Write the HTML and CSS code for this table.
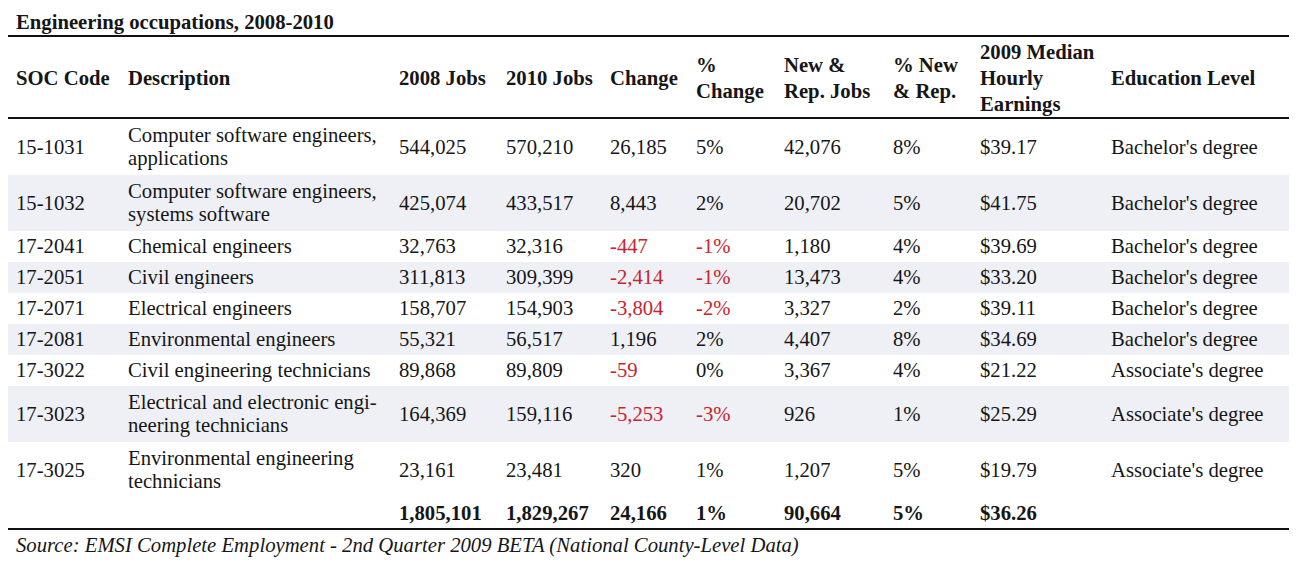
FILE: index.html
```html
<!DOCTYPE html>
<html>
<head>
<meta charset="utf-8">
<title>Engineering occupations, 2008-2010</title>
<link rel="stylesheet" href="styles.css">
</head>
<body>
<div class="wrap">
  <div class="title">Engineering occupations, 2008-2010</div>
  <table class="data">
    <colgroup>
      <col class="c1"><col class="c2"><col class="c3"><col class="c4"><col class="c5">
      <col class="c6"><col class="c7"><col class="c8"><col class="c9"><col class="c10">
    </colgroup>
    <thead>
      <tr>
        <th>SOC Code</th>
        <th>Description</th>
        <th>2008 Jobs</th>
        <th>2010 Jobs</th>
        <th>Change</th>
        <th>%<br>Change</th>
        <th>New &amp;<br>Rep. Jobs</th>
        <th>% New<br>&amp; Rep.</th>
        <th>2009 Median<br>Hourly<br>Earnings</th>
        <th>Education Level</th>
      </tr>
    </thead>
    <tbody>
      <tr class="two">
        <td>15-1031</td><td>Computer software engineers,<br>applications</td>
        <td>544,025</td><td>570,210</td><td>26,185</td><td>5%</td><td>42,076</td><td>8%</td><td>$39.17</td><td>Bachelor's degree</td>
      </tr>
      <tr class="two shade">
        <td>15-1032</td><td>Computer software engineers,<br>systems software</td>
        <td>425,074</td><td>433,517</td><td>8,443</td><td>2%</td><td>20,702</td><td>5%</td><td>$41.75</td><td>Bachelor's degree</td>
      </tr>
      <tr>
        <td>17-2041</td><td>Chemical engineers</td>
        <td>32,763</td><td>32,316</td><td class="neg">-447</td><td class="neg">-1%</td><td>1,180</td><td>4%</td><td>$39.69</td><td>Bachelor's degree</td>
      </tr>
      <tr class="shade">
        <td>17-2051</td><td>Civil engineers</td>
        <td>311,813</td><td>309,399</td><td class="neg">-2,414</td><td class="neg">-1%</td><td>13,473</td><td>4%</td><td>$33.20</td><td>Bachelor's degree</td>
      </tr>
      <tr>
        <td>17-2071</td><td>Electrical engineers</td>
        <td>158,707</td><td>154,903</td><td class="neg">-3,804</td><td class="neg">-2%</td><td>3,327</td><td>2%</td><td>$39.11</td><td>Bachelor's degree</td>
      </tr>
      <tr class="shade">
        <td>17-2081</td><td>Environmental engineers</td>
        <td>55,321</td><td>56,517</td><td>1,196</td><td>2%</td><td>4,407</td><td>8%</td><td>$34.69</td><td>Bachelor's degree</td>
      </tr>
      <tr>
        <td>17-3022</td><td>Civil engineering technicians</td>
        <td>89,868</td><td>89,809</td><td class="neg">-59</td><td>0%</td><td>3,367</td><td>4%</td><td>$21.22</td><td>Associate's degree</td>
      </tr>
      <tr class="two shade">
        <td>17-3023</td><td>Electrical and electronic engi-<br>neering technicians</td>
        <td>164,369</td><td>159,116</td><td class="neg">-5,253</td><td class="neg">-3%</td><td>926</td><td>1%</td><td>$25.29</td><td>Associate's degree</td>
      </tr>
      <tr class="two">
        <td>17-3025</td><td>Environmental engineering<br>technicians</td>
        <td>23,161</td><td>23,481</td><td>320</td><td>1%</td><td>1,207</td><td>5%</td><td>$19.79</td><td>Associate's degree</td>
      </tr>
    </tbody>
    <tfoot>
      <tr>
        <td></td><td></td>
        <td>1,805,101</td><td>1,829,267</td><td>24,166</td><td>1%</td><td>90,664</td><td>5%</td><td>$36.26</td><td></td>
      </tr>
    </tfoot>
  </table>
  <div class="source">Source: EMSI Complete Employment - 2nd Quarter 2009 BETA (National County-Level Data)</div>
</div>
</body>
</html>
```

FILE: styles.css
```css
html, body {
  margin: 0;
  padding: 0;
  background: #ffffff;
}

body {
  font-family: "Liberation Serif", "Times New Roman", serif;
  color: #161616;
  font-size: 20.7px;
}

.wrap {
  width: 1281px;
  padding: 10px 0 0 8px;
}

.title {
  font-weight: bold;
  line-height: 24px;
  height: 25px;
  padding-left: 8px;
}

.data {
  width: 1281px;
  table-layout: fixed;
  border-collapse: collapse;
  border-top: 2px solid #111;
  border-bottom: 2px solid #111;
}

.c1 { width: 112px; }
.c2 { width: 271px; }
.c3 { width: 107px; }
.c4 { width: 104px; }
.c5 { width: 86px; }
.c6 { width: 88px; }
.c7 { width: 109px; }
.c8 { width: 87px; }
.c9 { width: 131px; }
.c10 { width: 186px; }

.data th,
.data td {
  text-align: left;
  vertical-align: middle;
  padding: 0 0 0 8px;
  white-space: nowrap;
}

.data thead th {
  font-weight: bold;
  line-height: 26px;
  padding-top: 2px;
  padding-bottom: 0;
  border-bottom: 2px solid #111;
}

.data tbody td {
  line-height: 23px;
  padding-top: 4px;
  padding-bottom: 4px;
}

.data tbody tr.two td {
  padding-top: 5px;
  padding-bottom: 5px;
}

.data tbody tr.shade td {
  background: #eef0f5;
}

.data td.neg {
  color: #c8242f;
}

.data tfoot td {
  font-weight: bold;
  line-height: 23px;
  height: 29px;
  padding-top: 1px;
  padding-bottom: 0;
}

.source {
  font-style: italic;
  line-height: 24px;
  padding: 3px 0 0 8px;
}
```
